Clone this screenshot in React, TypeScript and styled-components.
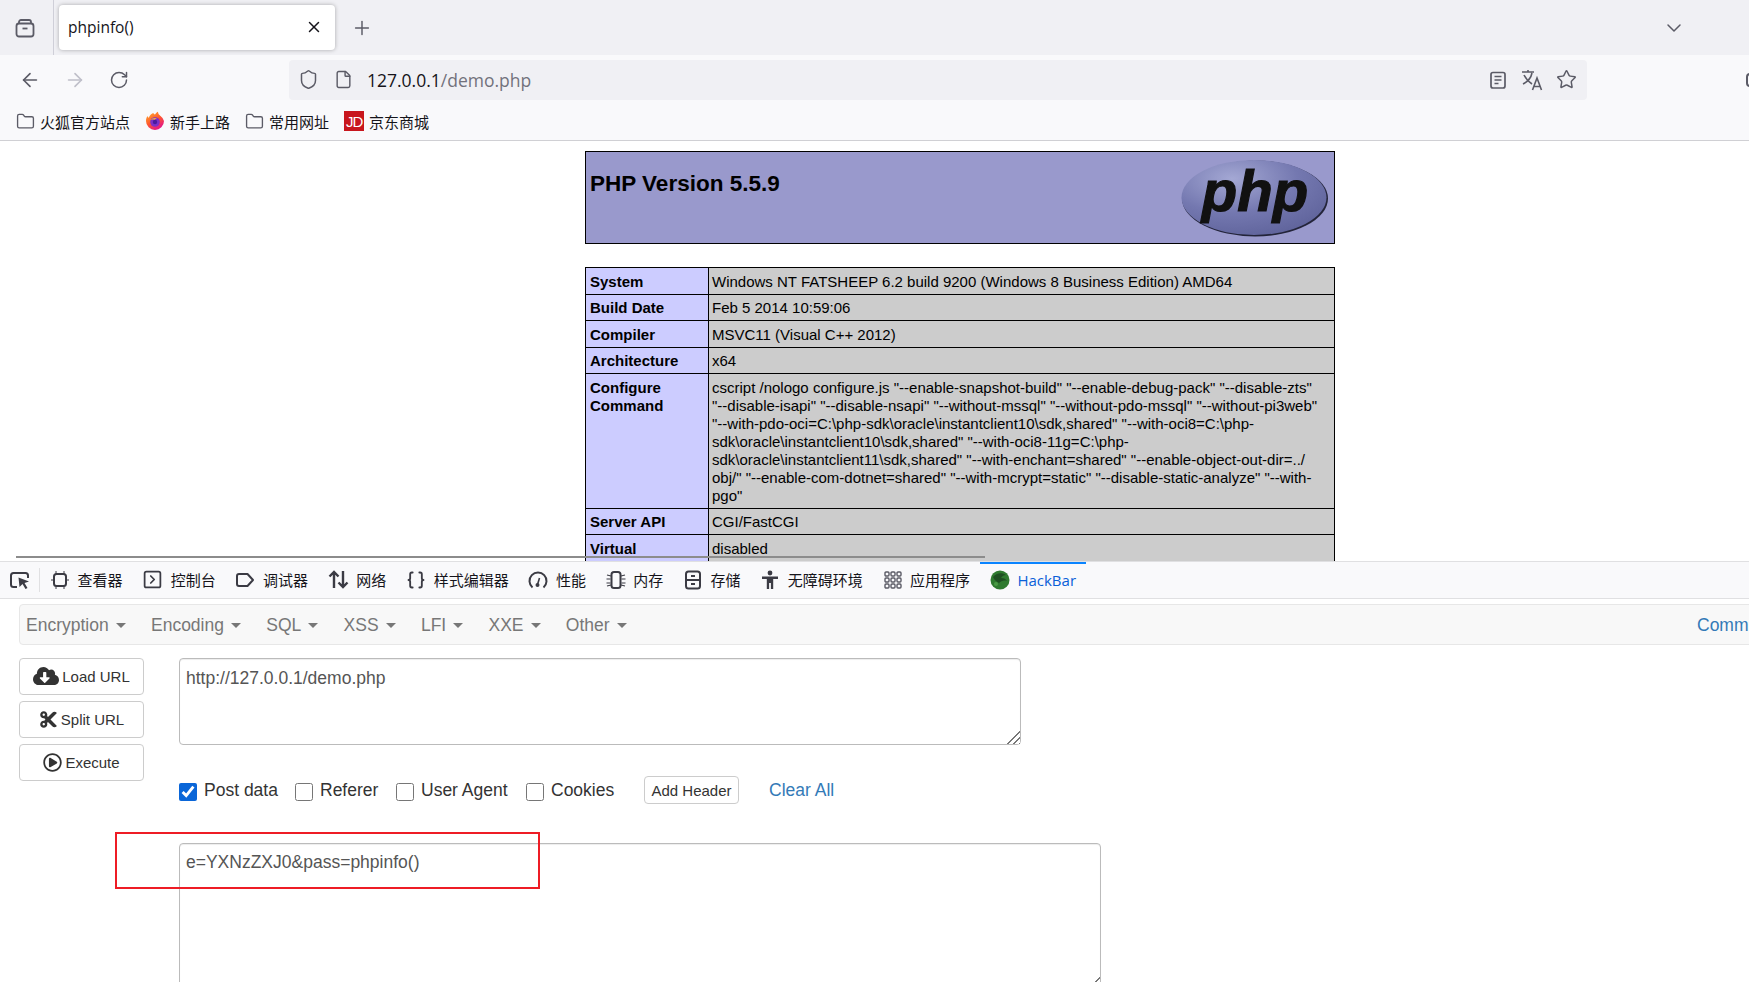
import React from 'react'
import styled, { createGlobalStyle } from 'styled-components'
import { ArrowLeft, ArrowRight, RotateCw, Shield, File, Star, X, Plus, ChevronDown, Folder, Braces, SquareChevronRight } from 'lucide-react'
import { FaCloudDownloadAlt, FaCut, FaRegPlayCircle } from 'react-icons/fa'

const Global = createGlobalStyle`
  html, body { margin: 0; padding: 0; background: #fff; }
  body { width: 1749px; height: 982px; overflow: hidden; font-family: "Liberation Sans", Arial, sans-serif; }
`

const ui = `"Open Sans", "Noto Sans CJK SC", sans-serif`
const iconColor = '#5b5b66'

const TabManagerIcon = () => (
  <svg width="22" height="22" viewBox="0 0 22 22" fill="none" stroke={iconColor} strokeWidth="1.8">
    <path d="M5 6V5a2 2 0 0 1 2-2h8a2 2 0 0 1 2 2v1" />
    <rect x="2.5" y="6.5" width="17" height="13" rx="2.5" />
    <path d="M8.5 11.5h5" />
  </svg>
)

const ReaderIcon = () => (
  <svg width="20" height="20" viewBox="0 0 20 20" fill="none" stroke={iconColor} strokeWidth="1.7">
    <rect x="3" y="2.500" width="14" height="15.500" rx="2" />
    <path d="M6.500 6.500h7M6.500 10h7M6.500 13.500h4" />
  </svg>
)

const TranslateIcon = () => (
  <svg width="24" height="24" viewBox="0 0 24 24" fill="none" stroke={iconColor} strokeWidth="1.6">
    <path d="M2 4h12M8 2v2M4 7c2 4 5 7 8 9M12 5c-1 5-5 9-9 11" />
    <path d="M12.5 22l4.5-12 4.5 12M14 18.5h6" />
  </svg>
)

const FirefoxLogo = () => (
  <svg width="20" height="20" viewBox="0 0 20 20">
    <defs>
      <linearGradient id="fx" x1="0" y1="0" x2="0.6" y2="1">
        <stop offset="0" stopColor="#ffb52e" />
        <stop offset="0.55" stopColor="#ff5a2c" />
        <stop offset="1" stopColor="#e31587" />
      </linearGradient>
    </defs>
    <path d="M10 19a9 9 0 0 1-9-9c0-2 .6-3.600 1.500-5 .3 1 .7 1.500 1.300 1.800C4.500 4 7 2.600 8.500 2c0 .8.500 1.300 1.500 1.500C11 1.800 12.500 1 13 .7c0 2 1 3 2.500 4.300A9 9 0 0 1 19 10a9 9 0 0 1-9 9z" fill="url(#fx)" />
    <circle cx="10" cy="11" r="4.800" fill="#7b2fc9" />
    <circle cx="10" cy="11" r="2.200" fill="#4a1a9e" />
    <path d="M5 9c2-2 5-2.500 7-1.800-1 .3-2 .8-2 1.500-2-.2-3.500 0-5 .3z" fill="#ffb52e" />
  </svg>
)

const PickIcon = () => (
  <svg width="22" height="22" viewBox="0 0 22 22" fill="none" stroke="#3b3b44" strokeWidth="2">
    <path d="M8 18H4.500A2.500 2.500 0 0 1 2 15.500v-9A2.500 2.500 0 0 1 4.500 4h12A2.500 2.500 0 0 1 19 6.500V9" />
    <path d="M9.500 8.500l10.500 4-4.500 1.500 3 5-2 1-3-5-3 3z" fill="#3b3b44" stroke="none" />
  </svg>
)

const InspectorIcon = () => (
  <svg width="20" height="20" viewBox="0 0 20 20" fill="none" stroke="#3b3b44" strokeWidth="2">
    <rect x="4" y="4" width="12" height="12" rx="2.500" />
    <path d="M6 1v3M14 1v3M6 16v3M14 16v3M1 10h3M16 10h3" strokeWidth="1" />
  </svg>
)

const DebuggerIcon = () => (
  <svg width="20" height="20" viewBox="0 0 20 20" fill="none" stroke="#3b3b44" strokeWidth="2">
    <path d="M4 4h8.500l5.500 6-5.500 6H4a2 2 0 0 1-2-2V6a2 2 0 0 1 2-2z" strokeLinejoin="round" />
  </svg>
)

const NetworkIcon = () => (
  <svg width="21" height="21" viewBox="0 0 21 21" fill="none" stroke="#3b3b44" strokeWidth="2.400">
    <path d="M6 19V3M1.500 7.500L6 3l4.500 4.500M15 2v16M10.500 13.500L15 18l4.500-4.500" />
  </svg>
)

const GaugeIcon = () => (
  <svg width="20" height="20" viewBox="0 0 20 20" fill="none" stroke="#3b3b44" strokeWidth="2">
    <path d="M4.500 17.500a8.500 8.500 0 1 1 11 0" />
    <path d="M9.500 14.500L11.500 8" strokeWidth="1.600" />
    <circle cx="9.500" cy="15" r="2" fill="#3b3b44" stroke="none" />
  </svg>
)

const MemoryIcon = () => (
  <svg width="20" height="20" viewBox="0 0 20 20" fill="none" stroke="#3b3b44" strokeWidth="2">
    <rect x="5.500" y="2" width="9" height="16" rx="2.500" />
    <path d="M1 5l4 1M.5 9h4M.5 13h4M1 16l4-1M19 5l-4 1M19.500 9h-4M19.500 13h-4M19 16l-4-1" strokeWidth="1.200" />
  </svg>
)

const StorageIcon = () => (
  <svg width="20" height="20" viewBox="0 0 20 20" fill="none" stroke="#3b3b44" strokeWidth="2">
    <rect x="3" y="1.500" width="14" height="17" rx="2.500" />
    <path d="M3 10h14M8 6h4M8 14h4" />
  </svg>
)

const AccessibilityIcon = () => (
  <svg width="20" height="20" viewBox="0 0 20 20" fill="#3b3b44">
    <circle cx="10" cy="3" r="2.400" />
    <path d="M2 6.500h16v2.400h-4.800V19h-2.300v-6H9.100v6H6.800V8.900H2z" />
  </svg>
)

const AppGridIcon = () => (
  <svg width="20" height="20" viewBox="0 0 20 20" fill="none" stroke="#5b5b66" strokeWidth="1.400">
    {[2, 8, 14].map(y =>
      [2, 8, 14].map(x => <rect key={`${x}-${y}`} x={x} y={y} width="4" height="4" rx="1" />)
    )}
  </svg>
)

const HackBarLogo = () => (
  <svg width="20" height="20" viewBox="0 0 20 20">
    <circle cx="10" cy="10" r="9.500" fill="#2f7a2f" />
    <path d="M3 7c3-4 9-5 13-2-2 0-4 1-5 3 3 0 5 1 6 3-3-1-6 0-8 2-2-1-5-3-6-6z" fill="#1f4f22" />
    <circle cx="6" cy="14" r="2" fill="#4a9a45" />
  </svg>
)

const PhpLogo = () => (
  <svg width="148" height="78" viewBox="0 0 148 78">
    <defs>
      <radialGradient id="phpBg" cx="0.35" cy="0.25" r="0.9">
        <stop offset="0" stopColor="#a4a8d4" />
        <stop offset="0.5" stopColor="#7478b0" />
        <stop offset="1" stopColor="#5a5e96" />
      </radialGradient>
    </defs>
    <ellipse cx="74" cy="39.500" rx="73" ry="38" fill="#23243a" />
    <ellipse cx="73" cy="38.500" rx="72.500" ry="37.500" fill="url(#phpBg)" />
    <text x="74" y="52" textAnchor="middle" fontFamily='"Liberation Sans", sans-serif' fontWeight="700" fontStyle="italic" fontSize="58" fill="#111" stroke="#111" strokeWidth="1.200">php</text>
  </svg>
)

const App = () => {
  return (
    <Shell>
      <Global />
      <TabStrip>
        <TabManager><TabManagerIcon /></TabManager>
        <Tab>
          <TabTitle>phpinfo()</TabTitle>
          <X size={18} color="#15141a" />
        </Tab>
        <NewTab><Plus size={22} color={iconColor} strokeWidth={1.6} /></NewTab>
        <StripEnd><ChevronDown size={24} color={iconColor} strokeWidth={1.5} /></StripEnd>
      </TabStrip>

      <Toolbar>
        <NavButtons>
          <ArrowLeft size={22} color={iconColor} strokeWidth={1.8} />
          <ArrowRight size={22} color="#bfbfc9" strokeWidth={1.8} />
          <RotateCw size={20} color={iconColor} strokeWidth={1.8} />
        </NavButtons>
        <UrlBar>
          <Shield size={21} color={iconColor} strokeWidth={1.7} />
          <File size={19} color={iconColor} strokeWidth={1.8} />
          <UrlText>127.0.0.1<UrlPath>/demo.php</UrlPath></UrlText>
          <UrlActions>
            <ReaderIcon />
            <TranslateIcon />
            <Star size={21} color={iconColor} strokeWidth={1.7} />
          </UrlActions>
        </UrlBar>
        <CutIcon />
      </Toolbar>

      <Bookmarks>
        <Bookmark><Folder size={19} color={iconColor} strokeWidth={1.7} />火狐官方站点</Bookmark>
        <Bookmark><FirefoxLogo />新手上路</Bookmark>
        <Bookmark><Folder size={19} color={iconColor} strokeWidth={1.7} />常用网址</Bookmark>
        <Bookmark><JdBadge>JD</JdBadge>京东商城</Bookmark>
      </Bookmarks>

      <PageArea>
        <InfoColumn>
          <Banner>
            <BannerTitle>PHP Version 5.5.9</BannerTitle>
            <PhpLogo />
          </Banner>
          <InfoTable>
            <colgroup>
              <col width="123" />
              <col />
            </colgroup>
            <tbody>
              <tr><Key>System</Key><Val>Windows NT FATSHEEP 6.2 build 9200 (Windows 8 Business Edition) AMD64</Val></tr>
              <tr><Key>Build Date</Key><Val>Feb 5 2014 10:59:06</Val></tr>
              <tr><Key>Compiler</Key><Val>MSVC11 (Visual C++ 2012)</Val></tr>
              <tr><Key>Architecture</Key><Val>x64</Val></tr>
              <tr>
                <Key>Configure Command</Key>
                <Val>
                  cscript /nologo configure.js "--enable-snapshot-build" "--enable-debug-pack" "--disable-zts"<br />
                  "--disable-isapi" "--disable-nsapi" "--without-mssql" "--without-pdo-mssql" "--without-pi3web"<br />
                  "--with-pdo-oci=C:\php-sdk\oracle\instantclient10\sdk,shared" "--with-oci8=C:\php-<br />
                  sdk\oracle\instantclient10\sdk,shared" "--with-oci8-11g=C:\php-<br />
                  sdk\oracle\instantclient11\sdk,shared" "--with-enchant=shared" "--enable-object-out-dir=../<br />
                  obj/" "--enable-com-dotnet=shared" "--with-mcrypt=static" "--disable-static-analyze" "--with-<br />
                  pgo"
                </Val>
              </tr>
              <tr><Key>Server API</Key><Val>CGI/FastCGI</Val></tr>
              <tr><Key>Virtual</Key><Val>disabled</Val></tr>
            </tbody>
          </InfoTable>
        </InfoColumn>
        <PageScrollbar />
      </PageArea>

      <DevTools>
        <DevBar>
          <PickButton><PickIcon /></PickButton>
          <DevTab><InspectorIcon />查看器</DevTab>
          <DevTab><SquareChevronRight size={21} color="#3b3b44" strokeWidth={2} />控制台</DevTab>
          <DevTab><DebuggerIcon />调试器</DevTab>
          <DevTab><NetworkIcon />网络</DevTab>
          <DevTab><Braces size={20} color="#3b3b44" strokeWidth={2.2} />样式编辑器</DevTab>
          <DevTab><GaugeIcon />性能</DevTab>
          <DevTab><MemoryIcon />内存</DevTab>
          <DevTab><StorageIcon />存储</DevTab>
          <DevTab><AccessibilityIcon />无障碍环境</DevTab>
          <DevTab><AppGridIcon />应用程序</DevTab>
          <DevTab $active><HackBarLogo />HackBar</DevTab>
        </DevBar>

        <HackBar>
          <MenuBar>
            {['Encryption', 'Encoding', 'SQL', 'XSS', 'LFI', 'XXE', 'Other'].map(name => (
              <MenuItem key={name}>{name}<Caret /></MenuItem>
            ))}
            <CommLink>Comm</CommLink>
          </MenuBar>

          <Workspace>
            <ActionColumn>
              <ActionButton><FaCloudDownloadAlt size={26} color="#333" />Load URL</ActionButton>
              <ActionButton><FaCut size={19} color="#333" />Split URL</ActionButton>
              <ActionButton><FaRegPlayCircle size={19} color="#333" />Execute</ActionButton>
            </ActionColumn>
            <Fields>
              <UrlInput defaultValue="http://127.0.0.1/demo.php" />
              <OptionRow>
                <Option $width={116}><CheckBox type="checkbox" defaultChecked />Post data</Option>
                <Option $width={101}><CheckBox type="checkbox" />Referer</Option>
                <Option $width={130}><CheckBox type="checkbox" />User Agent</Option>
                <Option $width={118}><CheckBox type="checkbox" />Cookies</Option>
                <AddHeader>Add Header</AddHeader>
                <ClearAll>Clear All</ClearAll>
              </OptionRow>
              <PostInput defaultValue="e=YXNzZXJ0&pass=phpinfo()" />
            </Fields>
          </Workspace>
        </HackBar>
      </DevTools>

      <Highlight />
    </Shell>
  )
}

export default App

const Shell = styled.div`
  position: relative;
  display: flex;
  flex-direction: column;
  width: 1749px;
  height: 982px;
  overflow: hidden;
  background: #fff;
`
const TabStrip = styled.div`
  display: flex;
  align-items: center;
  height: 55px;
  flex: none;
  background: #f0f0f4;
`
const TabManager = styled.div`
  display: flex;
  align-items: center;
  justify-content: center;
  width: 54px;
  height: 55px;
  box-sizing: border-box;
  padding-right: 3px;
  border-right: 1px solid #cfcfd8;
`
const Tab = styled.div`
  display: flex;
  align-items: center;
  justify-content: space-between;
  box-sizing: border-box;
  width: 276px;
  height: 45px;
  margin-left: 5px;
  margin-top: -1px;
  padding: 0 12px 0 9px;
  background: #fff;
  border-radius: 4px;
  box-shadow: 0 0 4px rgba(0, 0, 0, 0.3);
`
const TabTitle = styled.span`
  font: 15.5px ${ui};
  color: #15141a;
`
const NewTab = styled.div`
  display: flex;
  margin-left: 16px;
`
const StripEnd = styled.div`
  display: flex;
  margin-left: auto;
  margin-right: 63px;
`
const Toolbar = styled.div`
  display: flex;
  align-items: center;
  height: 49px;
  flex: none;
  background: #f9f9fb;
`
const NavButtons = styled.div`
  display: flex;
  align-items: center;
  flex: none;
  gap: 23px;
  width: 289px;
  box-sizing: border-box;
  padding-left: 19px;
`
const UrlBar = styled.div`
  display: flex;
  align-items: center;
  flex: none;
  box-sizing: border-box;
  width: 1298px;
  height: 40px;
  padding: 0 10px 0 9px;
  gap: 15px;
  background: #f0f0f4;
  border-radius: 4px;
`
const UrlText = styled.span`
  margin-left: -1px;
  font: 17.5px ${ui};
  color: #15141a;
`
const UrlPath = styled.span`
  color: #72727c;
`
const UrlActions = styled.div`
  display: flex;
  align-items: center;
  gap: 12px;
  margin-left: auto;
`
const CutIcon = styled.div`
  width: 10px;
  height: 14px;
  margin-left: 159px;
  box-sizing: border-box;
  border: 2px solid #5b5b66;
  border-radius: 4px;
  flex: none;
`
const Bookmarks = styled.div`
  display: flex;
  align-items: center;
  gap: 15px;
  height: 37px;
  flex: none;
  box-sizing: border-box;
  padding: 0 0 2px 16px;
  background: #f9f9fb;
  border-bottom: 1px solid #d0d0d4;
`
const Bookmark = styled.div`
  display: flex;
  align-items: center;
  gap: 5px;
  font: 15px ${ui};
  color: #15141a;
`
const JdBadge = styled.span`
  display: inline-flex;
  align-items: center;
  justify-content: center;
  width: 20px;
  height: 20px;
  background: #c8161d;
  color: #fff;
  font: 400 15px "Liberation Sans", sans-serif;
  letter-spacing: -1px;
`
const PageArea = styled.div`
  position: relative;
  flex: 1;
  min-height: 0;
  overflow: hidden;
  background: #fff;
`
const InfoColumn = styled.div`
  display: flex;
  flex-direction: column;
  gap: 23px;
  width: 750px;
  margin: 10px 0 0 585px;
`
const Banner = styled.div`
  display: flex;
  justify-content: space-between;
  box-sizing: border-box;
  height: 93px;
  padding: 7px 5px 0 4px;
  background: #99c;
  border: 1px solid #000;
`
const BannerTitle = styled.h1`
  margin: 12px 0 0;
  font: 700 22.5px "Liberation Sans", Arial, sans-serif;
  color: #000;
`
const InfoTable = styled.table`
  width: 750px;
  table-layout: fixed;
  border-collapse: collapse;
  font: 15px/18px "Liberation Sans", Arial, sans-serif;
  color: #000;
`
const Key = styled.td`
  padding: 4.5px 4px 3px;
  background: #ccf;
  border: 1px solid #000;
  font-weight: 700;
  vertical-align: top;
`
const Val = styled.td`
  padding: 4.5px 3px 3px;
  background: #ccc;
  border: 1px solid #000;
  vertical-align: top;
  white-space: nowrap;
`
const PageScrollbar = styled.div`
  position: absolute;
  left: 16px;
  bottom: 3px;
  width: 969px;
  height: 2px;
  background: #8c8c8c;
`
const DevTools = styled.div`
  display: flex;
  flex-direction: column;
  flex: none;
  height: 421px;
  overflow: hidden;
  background: #fff;
`
const DevBar = styled.div`
  display: flex;
  align-items: stretch;
  flex: none;
  height: 38px;
  box-sizing: border-box;
  background: #f9f9fb;
  border-top: 1px solid #e0e0e2;
  border-bottom: 1px solid #e0e0e2;
`
const PickButton = styled.div`
  display: flex;
  align-items: center;
  box-sizing: content-box;
  width: 22px;
  padding: 0 9px;
  position: relative;
  &::after {
    content: '';
    position: absolute;
    right: 0;
    top: 6px;
    bottom: 6px;
    width: 1px;
    background: #e0e0e2;
  }
`
const DevTab = styled.div<{ $active?: boolean }>`
  display: flex;
  align-items: center;
  gap: 7.6px;
  padding: 0 9.85px 1px;
  font: 15px ${ui};
  color: ${p => (p.$active ? '#0a60d8' : '#15141a')};
  box-shadow: ${p => (p.$active ? 'inset 0 2px 0 #0a84ff' : 'none')};
`
const HackBar = styled.div`
  display: flex;
  flex-direction: column;
  padding: 5px 0 0 19px;
  font-family: "Liberation Sans", Arial, sans-serif;
`
const MenuBar = styled.div`
  display: flex;
  align-items: center;
  box-sizing: border-box;
  width: 1760px;
  height: 41px;
  padding: 1px 0 0 6px;
  gap: 25.3px;
  background: #f8f8f8;
  border: 1px solid #e7e7e7;
  border-radius: 4px;
`
const MenuItem = styled.span`
  display: flex;
  align-items: center;
  gap: 7px;
  font-size: 17.5px;
  color: #777;
`
const Caret = styled.i`
  width: 0;
  height: 0;
  border-top: 5px solid #777;
  border-left: 5px solid transparent;
  border-right: 5px solid transparent;
`
const CommLink = styled.span`
  position: absolute;
  left: 1697px;
  font-size: 17.5px;
  color: #337ab7;
`
const Workspace = styled.div`
  display: flex;
  align-items: flex-start;
  gap: 35px;
  margin-top: 13px;
`
const ActionColumn = styled.div`
  display: flex;
  flex-direction: column;
  gap: 6.5px;
`
const ActionButton = styled.div`
  display: flex;
  align-items: center;
  justify-content: center;
  gap: 3px;
  box-sizing: border-box;
  width: 125px;
  height: 36.5px;
  background: #fff;
  border: 1px solid #ccc;
  border-radius: 4px;
  font-size: 15px;
  color: #333;
`
const Fields = styled.div`
  display: flex;
  flex-direction: column;
`
const textBox = `
  display: block;
  box-sizing: border-box;
  padding: 7px 6px;
  background: #fff;
  border: 1px solid #bbb;
  border-radius: 4px;
  box-shadow: inset 0 1px 1px rgba(0, 0, 0, 0.075);
  font: 17.5px/1.43 "Liberation Sans", Arial, sans-serif;
  color: #555;
  outline: none;
  resize: both;
  &::-webkit-resizer {
    background:
      linear-gradient(135deg, #fff 50%, transparent 50%),
      repeating-linear-gradient(135deg, #777 0 1.200px, #fff 1.200px 4px);
  }
`
const UrlInput = styled.textarea`
  ${textBox}
  width: 842px;
  height: 87px;
`
const OptionRow = styled.div`
  display: flex;
  align-items: center;
  height: 32px;
  margin-top: 29px;
`
const Option = styled.label<{ $width: number }>`
  display: flex;
  align-items: center;
  gap: 7px;
  width: ${p => p.$width}px;
  font-size: 17.5px;
  color: #333;
`
const CheckBox = styled.input`
  width: 18px;
  height: 18px;
  margin: 3px 0 0;
  accent-color: #0a66d8;
`
const AddHeader = styled.div`
  display: flex;
  align-items: center;
  justify-content: center;
  box-sizing: border-box;
  width: 95px;
  height: 28px;
  background: #fff;
  border: 1px solid #ccc;
  border-radius: 4px;
  font-size: 15px;
  color: #333;
`
const ClearAll = styled.span`
  margin-left: 30px;
  font-size: 17.5px;
  color: #337ab7;
`
const PostInput = styled.textarea`
  ${textBox}
  flex: none;
  width: 922px;
  height: 148px;
  margin-top: 37px;
  padding-top: 6px;
`
const Highlight = styled.div`
  position: absolute;
  left: 115px;
  top: 832px;
  width: 425px;
  height: 57px;
  box-sizing: border-box;
  border: 2px solid #ee1c25;
  pointer-events: none;
`
